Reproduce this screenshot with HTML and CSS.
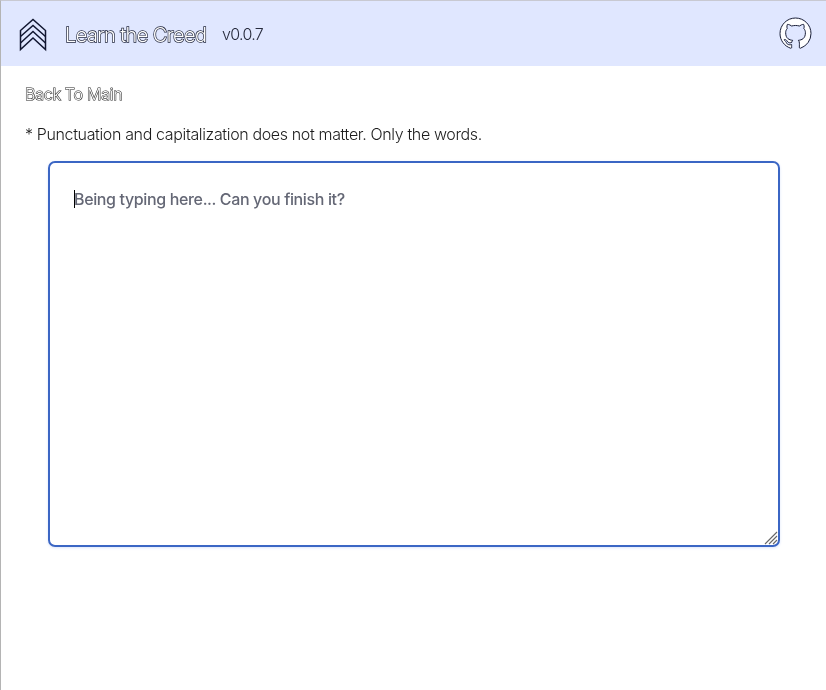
FILE: index.html
```html
<!DOCTYPE html>
<html lang="en">
<head>
<meta charset="utf-8">
<title>Learn the Creed</title>
<link rel="stylesheet" href="styles.css">
</head>
<body>
<header class="navbar">
  <svg class="rank" viewBox="0 0 28 34" aria-hidden="true">
    <path d="M1.5 12.5 14 1.5 26.5 12.5V31.5L14 20 1.5 31.5Z"/>
    <path d="M1.5 18.5 14 7.5 26.5 18.5M1.5 25 14 13.5 26.5 25"/>
  </svg>
  <a class="brand">Learn the Creed</a>
  <span class="version">v0.0.7</span>
  <svg class="github" viewBox="0 0 16 16" aria-hidden="true">
    <path d="M8 0C3.58 0 0 3.58 0 8c0 3.54 2.29 6.53 5.47 7.59.4.07.55-.17.55-.38 0-.19-.01-.82-.01-1.49-2.01.37-2.53-.49-2.69-.94-.09-.23-.48-.94-.82-1.13-.28-.15-.68-.52-.01-.53.63-.01 1.08.58 1.23.82.72 1.21 1.87.87 2.33.66.07-.52.28-.87.51-1.07-1.78-.2-3.64-.89-3.64-3.95 0-.87.31-1.59.82-2.15-.08-.2-.36-1.02.08-2.12 0 0 .67-.21 2.2.82.64-.18 1.32-.27 2-.27s1.36.09 2 .27c1.53-1.04 2.2-.82 2.2-.82.44 1.1.16 1.92.08 2.12.51.56.82 1.27.82 2.15 0 3.07-1.87 3.75-3.65 3.95.29.25.54.73.54 1.48 0 1.07-.01 1.93-.01 2.2 0 .21.15.46.55.38A8.01 8.01 0 0 0 16 8c0-4.42-3.58-8-8-8z"/>
  </svg>
</header>
<main class="content">
  <a class="back">Back To Main</a>
  <p class="note">* Punctuation and capitalization does not matter. Only the words.</p>
  <div class="editor">
    <span class="caret"></span>
    <span class="placeholder">Being typing here... Can you finish it?</span>
    <svg class="grip" viewBox="0 0 14 14" aria-hidden="true"><path d="M1 13 13 1M5 13 13 5M9 13 13 9"/></svg>
  </div>
</main>
</body>
</html>
```
FILE: styles.css
```css
* { box-sizing: border-box; }
body {
  margin: 0;
  height: 690px;
  overflow: hidden;
  border-left: 1px solid #b4b4b4;
  border-top: 1px solid #c8c9d2;
  background: #fff;
  color: #1c1c1c;
  font: 300 16px/24px Inter, sans-serif;
  letter-spacing: -.36px;
}
.brand, .version, .content { will-change: opacity; }
.navbar {
  display: flex;
  align-items: center;
  height: 65px;
  padding: 2px 15px 0 18px;
  background: #e0e7ff;
}
.rank { width: 28px; height: 34px; fill: none; stroke: #111630; stroke-width: 1.5; }
.brand {
  width: 142px;
  margin-left: 18px;
  white-space: nowrap;
  font-size: 20px;
  letter-spacing: -.6px;
  color: #fff;
  paint-order: stroke fill;
  -webkit-text-stroke: 1.4px #1c2138;
}
.version { margin: -1px 0 0 15px; letter-spacing: -.7px; color: #272b3d; }
.github { width: 31px; height: 31px; margin: -2px 0 0 auto; overflow: visible; fill: #fff; stroke: #111630; stroke-width: .5; }
.content { padding: 16px 46px 0 24px; }
.back { display: block; color: #fff; letter-spacing: -.25px; paint-order: stroke fill; -webkit-text-stroke: 1.1px #222; }
.note { margin: 16px 0 15px; }
.editor {
  position: relative;
  width: 732px;
  height: 386px;
  margin-left: 23px;
  padding: 24px;
  border: 2px solid #3b66c4;
  border-radius: 7px;
  box-shadow: 0 1px 3px #dce5fa;
  color: #646775;
  font-weight: 500;
}
.caret { position: absolute; left: 24px; top: 27px; width: 1px; height: 18px; background: #000; }
.grip { position: absolute; right: 0; bottom: 0; width: 14px; height: 14px; fill: none; stroke: #666; stroke-width: 1.1; }
```
